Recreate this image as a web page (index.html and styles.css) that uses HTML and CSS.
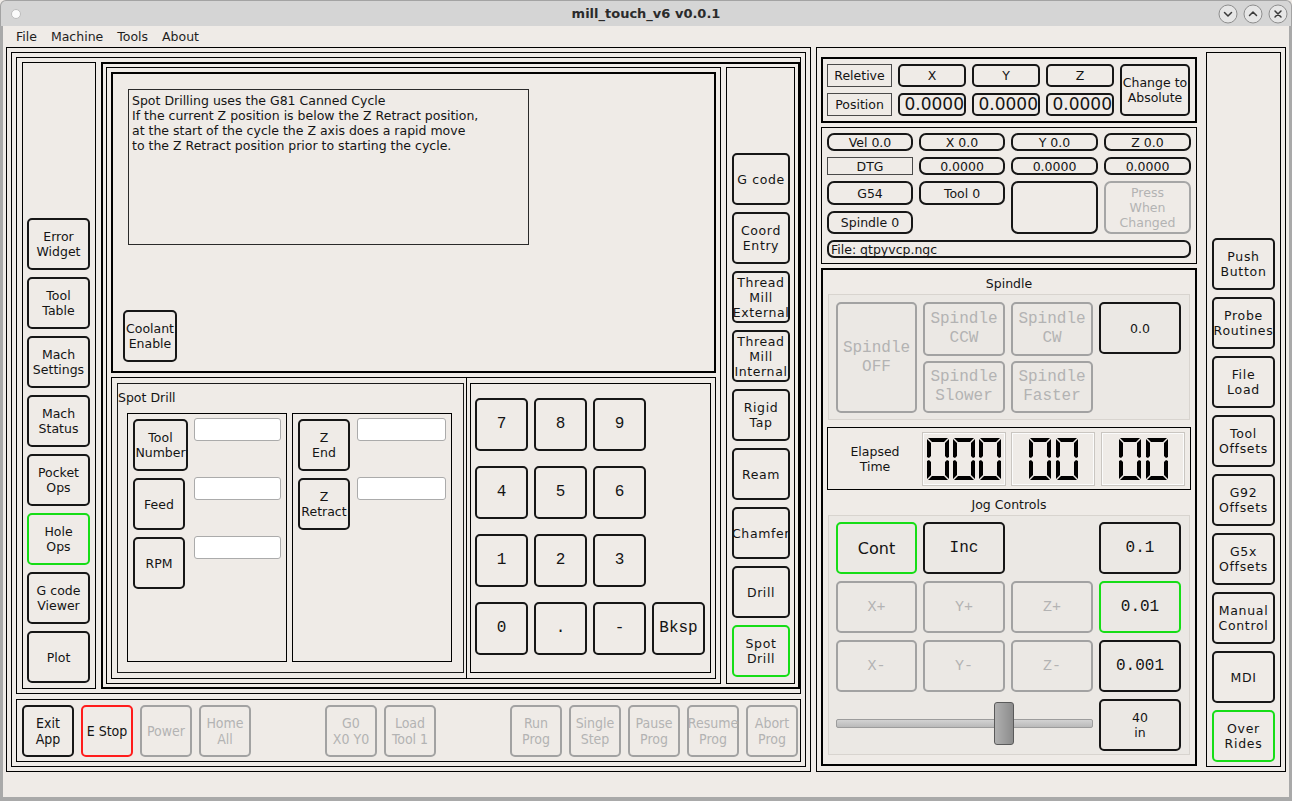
FILE: index.html
```html
<!DOCTYPE html>
<html>
<head>
<meta charset="utf-8">
<title>mill_touch_v6 v0.0.1</title>
<link rel="stylesheet" href="styles.css">
</head>
<body>
<div class="titlebar">
  <div class="tb-left"><span class="tb-dot"></span></div>
  <div class="tb-title">mill_touch_v6 v0.0.1</div>
  <div class="tb-right">
    <svg class="tb-btn" width="20" height="20" viewBox="0 0 20 20"><circle cx="10" cy="10" r="9" /><path d="M6.5 8.5L10 12L13.5 8.5" /></svg>
    <svg class="tb-btn" width="20" height="20" viewBox="0 0 20 20"><circle cx="10" cy="10" r="9" /><path d="M6.5 11.5L10 8L13.5 11.5" /></svg>
    <svg class="tb-btn" width="20" height="20" viewBox="0 0 20 20"><circle cx="10" cy="10" r="9" /><path d="M7 7L13 13M13 7L7 13" /></svg>
  </div>
</div>
<div class="winbody">
  <div class="menubar">
    <span class="menu">File</span><span class="menu">Machine</span><span class="menu">Tools</span><span class="menu">About</span>
  </div>
  <div class="main">
    <div class="lf1">
      <div class="lf2">
        <div class="upper">
          <div class="sidebar">
            <div class="btn sbtn">Error<br>Widget</div>
            <div class="btn sbtn">Tool<br>Table</div>
            <div class="btn sbtn">Mach<br>Settings</div>
            <div class="btn sbtn">Mach<br>Status</div>
            <div class="btn sbtn">Pocket<br>Ops</div>
            <div class="btn sbtn green">Hole<br>Ops</div>
            <div class="btn sbtn">G code<br>Viewer</div>
            <div class="btn sbtn">Plot</div>
          </div>
          <div class="center">
            <div class="thin-a">
              <div class="textarea">
                <div class="textbox">Spot Drilling uses the G81 Canned Cycle<br>If the current Z position is below the Z Retract position,<br>at the start of the cycle the Z axis does a rapid move<br>to the Z Retract position prior to starting the cycle.</div>
                <div class="btn coolant">Coolant<br>Enable</div>
              </div>
              <div class="lower">
                <div class="spotframe">
                  <div class="group">
                    <div class="group-title">Spot Drill</div>
                    <div class="subs">
                      <div class="sub sub-l">
                        <div class="btn fbtn wide">Tool<br>Number</div><div class="input"></div>
                        <div class="btn fbtn">Feed</div><div class="input"></div>
                        <div class="btn fbtn">RPM</div><div class="input"></div>
                      </div>
                      <div class="sub sub-r">
                        <div class="btn fbtn">Z<br>End</div><div class="input wide-in"></div>
                        <div class="btn fbtn">Z<br>Retract</div><div class="input wide-in"></div>
                      </div>
                    </div>
                  </div>
                </div>
                <div class="kpframe">
                  <div class="kpinner">
                    <div class="btn key">7</div><div class="btn key">8</div><div class="btn key">9</div><div class="kp-empty"></div>
                    <div class="btn key">4</div><div class="btn key">5</div><div class="btn key">6</div><div class="kp-empty"></div>
                    <div class="btn key">1</div><div class="btn key">2</div><div class="btn key">3</div><div class="kp-empty"></div>
                    <div class="btn key">0</div><div class="btn key">.</div><div class="btn key">-</div><div class="btn key">Bksp</div>
                  </div>
                </div>
              </div>
            </div>
            <div class="rcol">
              <div class="btn rbtn">G code</div>
              <div class="btn rbtn">Coord<br>Entry</div>
              <div class="btn rbtn">Thread<br>Mill<br>External</div>
              <div class="btn rbtn">Thread<br>Mill<br>Internal</div>
              <div class="btn rbtn">Rigid<br>Tap</div>
              <div class="btn rbtn">Ream</div>
              <div class="btn rbtn">Chamfer</div>
              <div class="btn rbtn">Drill</div>
              <div class="btn rbtn green">Spot<br>Drill</div>
            </div>
          </div>
        </div>
        <div class="bbar">
          <div class="btn bbtn">Exit<br>App</div>
          <div class="btn bbtn red">E Stop</div>
          <div class="btn bbtn dis">Power</div>
          <div class="btn bbtn dis">Home<br>All</div>
          <div class="bspacer"></div>
          <div class="btn bbtn dis">G0<br>X0 Y0</div>
          <div class="btn bbtn dis">Load<br>Tool 1</div>
          <div class="bspacer"></div>
          <div class="btn bbtn dis">Run<br>Prog</div>
          <div class="btn bbtn dis">Single<br>Step</div>
          <div class="btn bbtn dis">Pause<br>Prog</div>
          <div class="btn bbtn dis">Resume<br>Prog</div>
          <div class="btn bbtn dis">Abort<br>Prog</div>
        </div>
      </div>
    </div>
    <div class="rf">
      <div class="dcol">
        <div class="dro">
          <div class="lbl">Reletive</div>
          <div class="rb">X</div>
          <div class="rb">Y</div>
          <div class="rb">Z</div>
          <div class="rb cta">Change to<br>Absolute</div>
          <div class="lbl">Position</div>
          <div class="rb big">0.0000</div>
          <div class="rb big">0.0000</div>
          <div class="rb big">0.0000</div>
        </div>
        <div class="info">
          <div class="rb pill">Vel 0.0</div>
          <div class="rb pill">X 0.0</div>
          <div class="rb pill">Y 0.0</div>
          <div class="rb pill">Z 0.0</div>
          <div class="lbl">DTG</div>
          <div class="rb pill">0.0000</div>
          <div class="rb pill">0.0000</div>
          <div class="rb pill">0.0000</div>
          <div class="rb pill">G54</div>
          <div class="rb pill">Tool 0</div>
          <div class="rb pill blank"></div>
          <div class="rb pill pwc">Press<br>When<br>Changed</div>
          <div class="rb pill spin0">Spindle 0</div>
          <div class="rb pill file">File: qtpyvcp.ngc</div>
        </div>
        <div class="spbox">
          <div class="sectitle sp-t">Spindle</div>
          <div class="spgroup">
            <div class="btn mono dis spoff">Spindle<br>OFF</div>
            <div class="btn mono dis">Spindle<br>CCW</div>
            <div class="btn mono dis">Spindle<br>CW</div>
            <div class="btn spval">0.0</div>
            <div class="btn mono dis">Spindle<br>Slower</div>
            <div class="btn mono dis">Spindle<br>Faster</div>
          </div>
          <div class="elapsed">
            <div class="el-lbl">Elapsed<br>Time</div>
            <div class="lcd">
              <svg class="dg" width="22" height="42" viewBox="0 0 22 42"><path d="M1 0H21L17 4H5Z M0 1L4 5V18L2 20L0 19Z M22 1V19L20 20L18 18V5Z M0 23L2 22L4 24V37L0 41Z M22 23V41L18 37V24L20 22Z M1 42L5 38H17L21 42Z"/></svg>
              <svg class="dg" width="22" height="42" viewBox="0 0 22 42"><path d="M1 0H21L17 4H5Z M0 1L4 5V18L2 20L0 19Z M22 1V19L20 20L18 18V5Z M0 23L2 22L4 24V37L0 41Z M22 23V41L18 37V24L20 22Z M1 42L5 38H17L21 42Z"/></svg>
              <svg class="dg" width="22" height="42" viewBox="0 0 22 42"><path d="M1 0H21L17 4H5Z M0 1L4 5V18L2 20L0 19Z M22 1V19L20 20L18 18V5Z M0 23L2 22L4 24V37L0 41Z M22 23V41L18 37V24L20 22Z M1 42L5 38H17L21 42Z"/></svg>
            </div>
            <div class="lcd lcd2">
              <svg class="dg" width="22" height="42" viewBox="0 0 22 42"><path d="M1 0H21L17 4H5Z M0 1L4 5V18L2 20L0 19Z M22 1V19L20 20L18 18V5Z M0 23L2 22L4 24V37L0 41Z M22 23V41L18 37V24L20 22Z M1 42L5 38H17L21 42Z"/></svg>
              <svg class="dg" width="22" height="42" viewBox="0 0 22 42"><path d="M1 0H21L17 4H5Z M0 1L4 5V18L2 20L0 19Z M22 1V19L20 20L18 18V5Z M0 23L2 22L4 24V37L0 41Z M22 23V41L18 37V24L20 22Z M1 42L5 38H17L21 42Z"/></svg>
            </div>
            <div class="lcd lcd3">
              <svg class="dg" width="22" height="42" viewBox="0 0 22 42"><path d="M1 0H21L17 4H5Z M0 1L4 5V18L2 20L0 19Z M22 1V19L20 20L18 18V5Z M0 23L2 22L4 24V37L0 41Z M22 23V41L18 37V24L20 22Z M1 42L5 38H17L21 42Z"/></svg>
              <svg class="dg" width="22" height="42" viewBox="0 0 22 42"><path d="M1 0H21L17 4H5Z M0 1L4 5V18L2 20L0 19Z M22 1V19L20 20L18 18V5Z M0 23L2 22L4 24V37L0 41Z M22 23V41L18 37V24L20 22Z M1 42L5 38H17L21 42Z"/></svg>
            </div>
          </div>
          <div class="sectitle jog-t">Jog Controls</div>
          <div class="joggroup">
            <div class="btn jb sans16 green">Cont</div>
            <div class="btn jb mono16">Inc</div>
            <div class="jog-empty"></div>
            <div class="btn jb mono16">0.1</div>
            <div class="btn jb mono15 dis">X+</div>
            <div class="btn jb mono15 dis">Y+</div>
            <div class="btn jb mono15 dis">Z+</div>
            <div class="btn jb mono16 green">0.01</div>
            <div class="btn jb mono15 dis">X-</div>
            <div class="btn jb mono15 dis">Y-</div>
            <div class="btn jb mono15 dis">Z-</div>
            <div class="btn jb mono16">0.001</div>
            <div class="slider"><div class="groove"><div class="handle"></div></div></div>
            <div class="btn jb">40<br>in</div>
          </div>
        </div>
      </div>
      <div class="rsb">
        <div class="btn rsbtn">Push<br>Button</div>
        <div class="btn rsbtn">Probe<br>Routines</div>
        <div class="btn rsbtn">File<br>Load</div>
        <div class="btn rsbtn">Tool<br>Offsets</div>
        <div class="btn rsbtn">G92<br>Offsets</div>
        <div class="btn rsbtn">G5x<br>Offsets</div>
        <div class="btn rsbtn">Manual<br>Control</div>
        <div class="btn rsbtn">MDI</div>
        <div class="btn rsbtn green">Over<br>Rides</div>
      </div>
    </div>
  </div>
  <div class="status"></div>
</div>
</body>
</html>
```

FILE: styles.css
```css
* { box-sizing: border-box; margin: 0; padding: 0; }
html, body { width: 1292px; height: 801px; overflow: hidden; }
body {
  background: #efebe7;
  font-family: "DejaVu Sans", "Noto Sans", sans-serif;
  font-size: 12.5px;
  line-height: 15px;
  color: #141414;
}

/* title bar */
.titlebar {
  height: 26px;
  background: #d5d5d5;
  border: 1px solid #a3a3a3;
  border-bottom: 0;
  border-radius: 6px 6px 0 0;
  display: grid;
  grid-template-columns: 1fr auto 1fr;
  align-items: center;
}
.tb-left { padding-left: 10px; display: flex; align-items: center; }
.tb-dot { width: 10px; height: 10px; border-radius: 50%; background: #fbfbfb; border: 1px solid #bdbdbd; }
.tb-title { font-weight: bold; font-size: 13px; color: #2b2b2b; }
.tb-right { display: flex; justify-content: flex-end; gap: 5px; padding-right: 3px; }
.tb-btn circle { fill: #e6e6e6; stroke: #8e8e8e; stroke-width: 1; }
.tb-btn path { fill: none; stroke: #3a3a3a; stroke-width: 1.5; stroke-linecap: round; stroke-linejoin: round; }

/* window body */
.winbody {
  height: 775px;
  border: solid #a9a9a9;
  border-width: 0 3px 4px 3px;
  display: flex;
  flex-direction: column;
}
.menubar { height: 21px; display: flex; align-items: center; padding-left: 6px; color: #1e1e1e; }
.menu { padding: 0 7px; line-height: 21px; }
.main { height: 725px; display: flex; gap: 5px; padding: 0 3px; }
.status { flex: 1; }

/* generic button */
.btn {
  flex: none;
  border: 2px solid #161616;
  border-radius: 5px;
  display: flex;
  align-items: center;
  justify-content: center;
  text-align: center;
  white-space: nowrap;
}
.dis { border-color: #a2a2a2; color: #b3b3b3; }
.green { border-color: #16dd16; }
.red { border-color: #ff1c1c; }

/* left half */
.lf1 { width: 805px; height: 725px; border: 1px solid #000; padding: 4px; }
.lf2 { height: 100%; border: 1px solid #000; padding: 4px; display: flex; flex-direction: column; gap: 5px; }
.upper { height: 637px; border: 1px solid #000; padding: 4px 0 4px 5px; display: flex; gap: 5px; }
.sidebar {
  width: 74px; height: 627px; border: 1px solid #000;
  padding: 0 5px 5px 4px;
  display: flex; flex-direction: column; justify-content: flex-end; gap: 7px;
}
.sbtn { width: 63px; height: 52px; }

.center { width: 699px; height: 627px; border: 2px solid #000; padding: 3px; display: flex; gap: 5px; }
.thin-a { width: 615px; height: 617px; border: 1px solid #000; padding: 4px; display: flex; flex-direction: column; gap: 4px; }
.textarea {
  height: 301px; border: 2px solid #000;
  padding: 15px 0 9px 10px;
  display: flex; flex-direction: column; align-items: flex-start;
}
.textbox { margin-left: 5px; width: 401px; height: 156px; border: 1px solid #2a2a2a; padding: 3px 3px; }
.coolant { margin-top: auto; width: 54px; height: 52px; }

.lower { height: 302px; display: flex; }
.spotframe { width: 355px; height: 302px; border: 1px solid #000; border-right: 0; padding: 5px 2px 5px 5px; }
.group { width: 347px; height: 290px; border: 1px solid #1a1a1a; }
.group-title { height: 29px; line-height: 27px; }
.subs { display: flex; gap: 5px; padding-left: 9px; }
.sub {
  width: 160px; height: 249px; border: 1px solid #000;
  padding: 5px 0 0 5px;
  display: grid; grid-auto-rows: 52px; row-gap: 7px; align-content: start; align-items: start;
}
.sub-l { grid-template-columns: 55px 87px; column-gap: 6px; }
.sub-r { grid-template-columns: 52px 89px; column-gap: 7px; }
.fbtn { width: 52px; height: 52px; }
.fbtn.wide { width: 55px; }
.input { height: 23px; margin-top: -1px; background: #fff; border: 1px solid #ababab; border-radius: 3px; }

.kpframe { width: 250px; height: 302px; border: 1px solid #000; padding: 5px 4px 5px 3px; }
.kpinner {
  height: 100%; border: 1px solid #000;
  padding: 14px 0 0 4px;
  display: grid; grid-template-columns: repeat(4, 53px); grid-auto-rows: 53px;
  column-gap: 6px; row-gap: 15px; align-content: start;
}
.key { font-family: "Liberation Mono", "DejaVu Sans Mono", monospace; font-size: 16px; }

.rcol {
  width: 69px; height: 617px; border: 1px solid #000;
  padding: 0 0 6px 5px;
  display: flex; flex-direction: column; justify-content: flex-end; gap: 7px;
}
.rbtn { width: 58px; height: 52px; letter-spacing: 0.6px; }

.bbar { height: 63px; border: 1px solid #000; padding: 5px 0 0 5px; display: flex; gap: 7px; }
.bbtn {
  width: 52px; height: 52px;
  font-family: "DejaVu Sans Condensed", "Liberation Sans Narrow", "DejaVu Sans", sans-serif;
  font-stretch: condensed;
  font-size: 14px; line-height: 16px;
}
.bspacer { width: 60px; flex: none; }

/* right half */
.rf { width: 470px; height: 725px; border: 1px solid #000; padding: 4px; display: flex; gap: 5px; }
.dcol { width: 380px; display: flex; flex-direction: column; gap: 4px; padding-top: 5px; }

.lbl { border: 1px solid #4a4a4a; display: flex; align-items: center; justify-content: center; }
.rb { border: 2px solid #161616; border-radius: 5px; display: flex; align-items: center; justify-content: center; text-align: center; white-space: nowrap; }
.pill { border-radius: 7px; }

.dro {
  width: 376px; height: 66px; border: 2px solid #000;
  padding: 5px 0 0 4px;
  display: grid;
  grid-template-columns: 65px 68px 68px 68px 70px;
  grid-template-rows: 23px 23px;
  gap: 6px;
}
.big { font-size: 17px; justify-content: flex-end; padding-right: 0; }
.cta { grid-column: 5; grid-row: 1 / 3; }

.info {
  width: 376px; height: 137px; border: 1px solid #000;
  padding: 5px 0 0 5px;
  display: grid;
  grid-template-columns: 86px 86px 87px 87px;
  grid-template-rows: 18px 18px 24px 23px 18px;
  gap: 6px;
}
.blank { grid-column: 3; grid-row: 3 / 5; }
.pwc { grid-column: 4; grid-row: 3 / 5; border-color: #a6a6a6; color: #b3b3b3; }
.spin0 { grid-column: 1; grid-row: 4; }
.file { grid-column: 1 / 5; grid-row: 5; justify-content: flex-start; padding-left: 2px; }

.spbox { width: 376px; height: 498px; border: 2px solid #000; display: flex; flex-direction: column; }
.sectitle { text-align: center; line-height: 20px; }
.sp-t { height: 24px; padding-top: 4px; }
.jog-t { height: 25px; padding-top: 5px; }
.spgroup {
  margin-left: 5px; width: 362px; height: 126px;
  border: 1px solid #d8d4cf; background: #ebe8e4;
  padding: 7px 0 0 7px;
  display: grid;
  grid-template-columns: 81px 82px 82px 82px;
  grid-template-rows: 54px 52px;
  column-gap: 6px; row-gap: 5px;
}
.mono { font-family: "Liberation Mono", "DejaVu Sans Mono", monospace; font-size: 16px; line-height: 19px; }
.spoff { grid-row: 1 / 3; }
.spval { height: 52px; align-self: start; }

.elapsed { margin: 7px 0 0 4px; width: 364px; height: 63px; border: 1px solid #000; display: flex; padding-top: 4px; }
.el-lbl { width: 94px; height: 54px; display: flex; align-items: center; justify-content: center; text-align: center; }
.lcd {
  width: 84px; height: 54px;
  border: 1px solid #cac6c1;
  box-shadow: inset 0 0 0 1px #fbfbfb;
  display: flex; align-items: center; justify-content: center; gap: 4px;
}
.lcd2 { margin-left: 5px; gap: 5px; }
.lcd3 { margin-left: 6px; gap: 5px; }
.dg path { fill: #000; }

.joggroup {
  margin-left: 5px; width: 362px; height: 240px;
  border: 1px solid #d8d4cf; background: #ebe8e4;
  padding: 6px 0 0 7px;
  display: grid;
  grid-template-columns: 81px 82px 82px 82px;
  grid-auto-rows: 52px;
  gap: 7px 6px;
}
.sans16 { font-size: 16px; }
.mono16 { font-family: "Liberation Mono", "DejaVu Sans Mono", monospace; font-size: 16px; }
.mono15 { font-family: "Liberation Mono", "DejaVu Sans Mono", monospace; font-size: 15px; }
.slider { grid-column: 1 / 4; padding-top: 20px; }
.groove {
  height: 9px; border: 1px solid #9c9c9c; border-radius: 2px;
  background: linear-gradient(#d2d2d2, #bababa);
  display: flex; align-items: center;
}
.handle {
  flex: none; margin-left: 157px; width: 20px; height: 43px;
  border: 1px solid #5a5a5a; border-radius: 3px;
  background: linear-gradient(90deg, #b0b0b0, #8c8c8c);
}

.rsb {
  width: 75px; border: 1px solid #000;
  padding: 0 5px 4px 5px;
  display: flex; flex-direction: column; justify-content: flex-end; gap: 7px;
}
.rsbtn { width: 63px; height: 52px; letter-spacing: 0.7px; }
```
